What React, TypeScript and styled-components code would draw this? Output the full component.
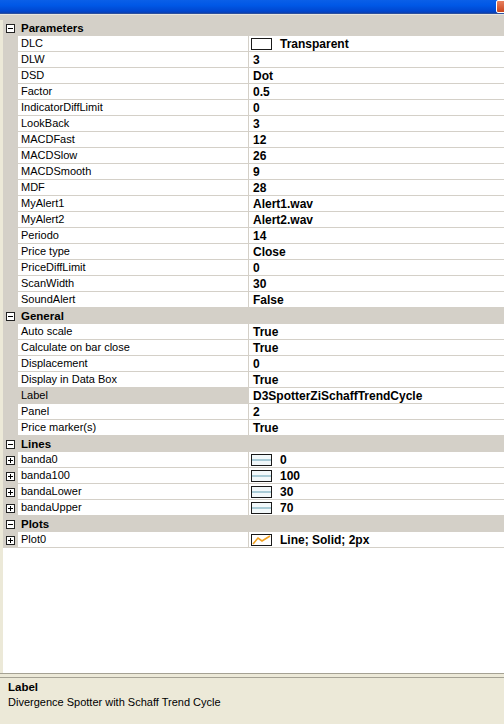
import { createGlobalStyle } from "styled-components";
import styled from "styled-components";

const GlobalStyle = createGlobalStyle`
  html, body {
    margin: 0;
    padding: 0;
    background: #ece9d8;
  }
  body {
    font-family: Tahoma, "Liberation Sans", Arial, sans-serif;
    font-size: 11px;
    color: #000;
  }
  * {
    box-sizing: border-box;
  }
`;

const Window = styled.div`
  width: 504px;
  height: 724px;
  display: flex;
  flex-direction: column;
  overflow: hidden;
`;

const TitleBar = styled.div`
  height: 14px;
  flex: none;
  background: linear-gradient(to bottom, #0a5fe8 0%, #0058e6 40%, #0047d0 85%, #0b3fb0 100%);
  border-bottom: 1px solid #2a4fa0;
  position: relative;
`;

const CloseButton = styled.div`
  position: absolute;
  right: -6px;
  top: 0;
  width: 14px;
  height: 13px;
  border: 1px solid #fff;
  border-radius: 2px;
  background: linear-gradient(to bottom, #e8815e, #c9451e);
`;

const Band = styled.div`
  height: 6px;
  flex: none;
  background: #d4d0c8;
  border-top: 1px solid #e8e6df;
`;

const Grid = styled.div`
  flex: 1;
  background: #fff;
  border-left: 3px solid #ece9d8;
  display: flex;
  flex-direction: column;
`;

const Row = styled.div`
  display: flex;
  height: 16px;
`;

const Margin = styled.div`
  width: 15px;
  flex: none;
  background: #d4d0c8;
  display: flex;
  align-items: center;
  justify-content: center;
`;

const ToggleBox = styled.div`
  width: 9px;
  height: 9px;
  border: 1px solid #222;
  background: #fff;
  position: relative;

  &::before {
    content: "";
    position: absolute;
    left: 1px;
    right: 1px;
    top: 3px;
    height: 1px;
    background: #000;
  }
`;

const PlusBox = styled(ToggleBox)`
  &::after {
    content: "";
    position: absolute;
    top: 1px;
    bottom: 1px;
    left: 3px;
    width: 1px;
    background: #000;
  }
`;

const CategoryName = styled.div`
  flex: 1;
  background: #d4d0c8;
  font-weight: bold;
  font-size: 11.5px;
  line-height: 16px;
  padding-left: 3px;
`;

const NameCell = styled.div<{ $selected?: boolean }>`
  width: 231px;
  flex: none;
  padding-left: 3px;
  line-height: 15px;
  border-bottom: 1px solid #d4d0c8;
  border-right: 1px solid #d4d0c8;
  background: ${(p) => (p.$selected ? "#d4d0c8" : "#fff")};
  white-space: nowrap;
  overflow: hidden;
`;

const ValueCell = styled.div`
  flex: 1;
  display: flex;
  align-items: center;
  gap: 8px;
  padding-left: 4px;
  height: 16px;
  border-bottom: 1px solid #d4d0c8;
  font-weight: bold;
  font-size: 12px;
  white-space: nowrap;
  overflow: hidden;
`;

const Swatch = styled.svg`
  flex: none;
  display: block;
  margin-left: -2px;
`;

const Blank = styled.div`
  flex: 1;
  background: #fff;
`;

const Divider = styled.div`
  height: 5px;
  flex: none;
  border-top: 1px solid #a5a294;
  border-bottom: 1px solid #a5a294;
  background: #ece9d8;
`;

const Help = styled.div`
  height: 46px;
  flex: none;
  background: #ece9d8;
  padding: 2px 0 0 8px;
  line-height: 15px;
`;

const HelpTitle = styled.div`
  font-weight: bold;
  font-size: 11.5px;
`;

type Swatchy = "none" | "empty" | "line" | "plot";

interface Prop {
  name: string;
  value: string;
  swatch?: Swatchy;
  expandable?: boolean;
  selected?: boolean;
}

interface Category {
  title: string;
  props: Prop[];
}

const categories: Category[] = [
  {
    title: "Parameters",
    props: [
      { name: "DLC", value: "Transparent", swatch: "empty" },
      { name: "DLW", value: "3" },
      { name: "DSD", value: "Dot" },
      { name: "Factor", value: "0.5" },
      { name: "IndicatorDiffLimit", value: "0" },
      { name: "LookBack", value: "3" },
      { name: "MACDFast", value: "12" },
      { name: "MACDSlow", value: "26" },
      { name: "MACDSmooth", value: "9" },
      { name: "MDF", value: "28" },
      { name: "MyAlert1", value: "Alert1.wav" },
      { name: "MyAlert2", value: "Alert2.wav" },
      { name: "Periodo", value: "14" },
      { name: "Price type", value: "Close" },
      { name: "PriceDiffLimit", value: "0" },
      { name: "ScanWidth", value: "30" },
      { name: "SoundAlert", value: "False" },
    ],
  },
  {
    title: "General",
    props: [
      { name: "Auto scale", value: "True" },
      { name: "Calculate on bar close", value: "True" },
      { name: "Displacement", value: "0" },
      { name: "Display in Data Box", value: "True" },
      { name: "Label", value: "D3SpotterZiSchaffTrendCycle", selected: true },
      { name: "Panel", value: "2" },
      { name: "Price marker(s)", value: "True" },
    ],
  },
  {
    title: "Lines",
    props: [
      { name: "banda0", value: "0", swatch: "line", expandable: true },
      { name: "banda100", value: "100", swatch: "line", expandable: true },
      { name: "bandaLower", value: "30", swatch: "line", expandable: true },
      { name: "bandaUpper", value: "70", swatch: "line", expandable: true },
    ],
  },
  {
    title: "Plots",
    props: [{ name: "Plot0", value: "Line; Solid; 2px", swatch: "plot", expandable: true }],
  },
];

function SwatchIcon({ kind }: { kind: Swatchy }) {
  if (kind === "none") return null;
  return (
    <Swatch width="21" height="12" viewBox="0 0 21 12">
      <rect x="0.5" y="0.5" width="20" height="11" fill="#fff" stroke="#1a1a1a" />
      {kind === "line" && (
        <>
          <rect x="1" y="1" width="19" height="10" fill="#f2f8fa" />
          <line x1="1" y1="6" x2="20" y2="6" stroke="#a9cbd6" strokeWidth="2" />
        </>
      )}
      {kind === "plot" && (
        <polyline points="2,10 7,4 11,7 19,2" fill="none" stroke="#f0a020" strokeWidth="1.6" />
      )}
    </Swatch>
  );
}

function PropertyRow({ prop }: { prop: Prop }) {
  return (
    <Row>
      <Margin>{prop.expandable && <PlusBox />}</Margin>
      <NameCell $selected={prop.selected}>{prop.name}</NameCell>
      <ValueCell>
        <SwatchIcon kind={prop.swatch ?? "none"} />
        <span>{prop.value}</span>
      </ValueCell>
    </Row>
  );
}

export default function App() {
  return (
    <>
      <GlobalStyle />
      <Window>
        <TitleBar>
          <CloseButton />
        </TitleBar>
        <Band />
        <Grid>
          {categories.map((cat) => (
            <div key={cat.title}>
              <Row>
                <Margin>
                  <ToggleBox />
                </Margin>
                <CategoryName>{cat.title}</CategoryName>
              </Row>
              {cat.props.map((p) => (
                <PropertyRow key={p.name} prop={p} />
              ))}
            </div>
          ))}
          <Blank />
        </Grid>
        <Divider />
        <Help>
          <HelpTitle>Label</HelpTitle>
          <div>Divergence Spotter with Schaff Trend Cycle</div>
        </Help>
      </Window>
    </>
  );
}
